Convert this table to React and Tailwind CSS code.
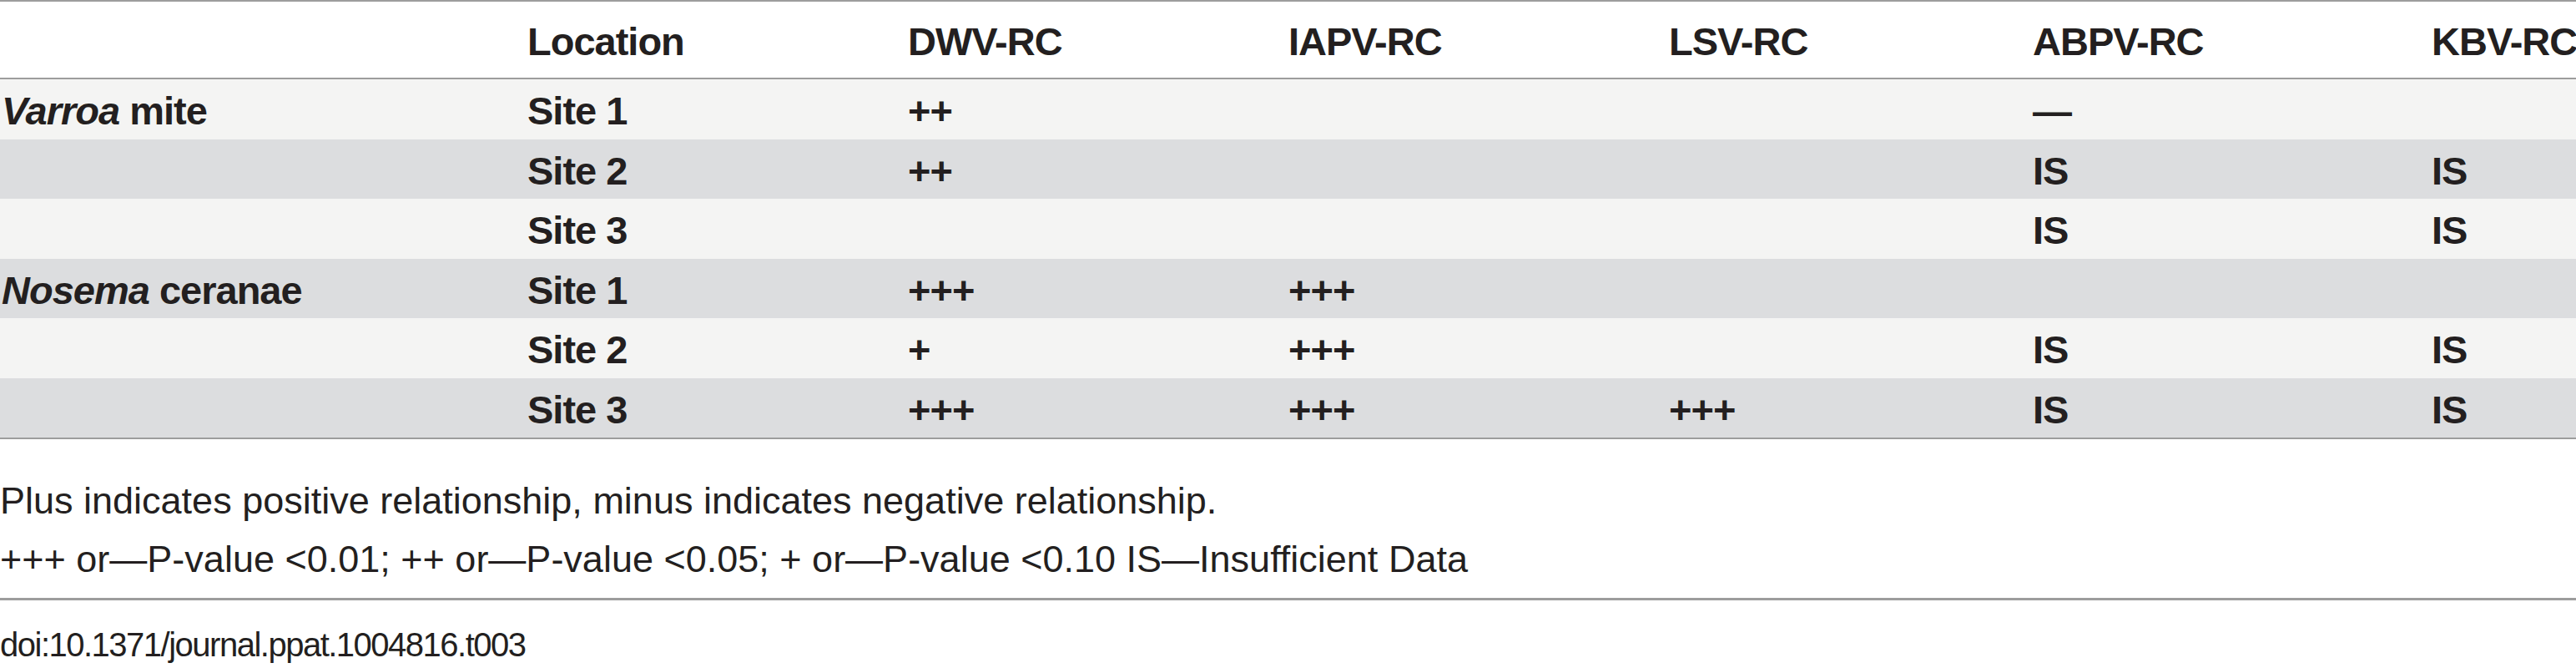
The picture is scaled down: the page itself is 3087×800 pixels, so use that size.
import React from "react";

const rows = [
  { sp: <span><i>Varroa</i> mite</span>, loc: "Site 1", v: ["++", "", "", "—", ""], dark: false },
  { sp: null, loc: "Site 2", v: ["++", "", "", "IS", "IS"], dark: true },
  { sp: null, loc: "Site 3", v: ["", "", "", "IS", "IS"], dark: false },
  { sp: <span><i>Nosema</i> ceranae</span>, loc: "Site 1", v: ["+++", "+++", "", "", ""], dark: true },
  { sp: null, loc: "Site 2", v: ["+", "+++", "", "IS", "IS"], dark: false },
  { sp: null, loc: "Site 3", v: ["+++", "+++", "+++", "IS", "IS"], dark: true },
];

const heads = ["", "Location", "DWV-RC", "IAPV-RC", "LSV-RC", "ABPV-RC", "KBV-RC"];

export default function App() {
  return (
    <div className="w-[3087px] h-[800px] bg-white text-[#231f20] overflow-hidden" style={{ fontFamily: '"Liberation Sans", Arial, sans-serif' }}>
      <div className="border-t-2 border-b-2 border-[#9d9d9d]">
        <div className="grid grid-cols-[632px_456px_456px_456px_436px_478px_173px] h-[93px] border-b-2 border-[#9d9d9d] bg-white">
          {heads.map((h, i) => (
            <div key={i} className={`flex items-center pt-[4px] text-[47px] font-bold leading-none tracking-[-1px] whitespace-nowrap ${i === 0 ? "pl-[2px]" : ""}`}>
              {h}
            </div>
          ))}
        </div>
        {rows.map((r, ri) => (
          <div key={ri} className={`grid grid-cols-[632px_456px_456px_456px_436px_478px_173px] h-[71.5px] ${r.dark ? "bg-[#dcdddf]" : "bg-[#f4f4f3]"}`}>
            <div className="flex items-center pt-[4px] pl-[2px] text-[47px] font-bold leading-none tracking-[-1px] whitespace-nowrap">{r.sp}</div>
            <div className="flex items-center pt-[4px] text-[47px] font-bold leading-none tracking-[-1px] whitespace-nowrap">{r.loc}</div>
            {r.v.map((c, ci) => (
              <div key={ci} className="flex items-center pt-[4px] text-[47px] font-bold leading-none tracking-[-1px] whitespace-nowrap">{c}</div>
            ))}
          </div>
        ))}
      </div>
      <div className="mt-[39px] text-[45px] leading-[70px] whitespace-nowrap">
        <div>Plus indicates positive relationship, minus indicates negative relationship.</div>
        <div>+++ or—P-value &lt;0.01; ++ or—P-value &lt;0.05; + or—P-value &lt;0.10 IS—Insufficient Data</div>
      </div>
      <div className="mt-[11px] border-t-[3px] border-[#9d9d9d]"></div>
      <div className="mt-[33px] text-[40px] leading-none tracking-[-1.5px] whitespace-nowrap">doi:10.1371/journal.ppat.1004816.t003</div>
    </div>
  );
}
